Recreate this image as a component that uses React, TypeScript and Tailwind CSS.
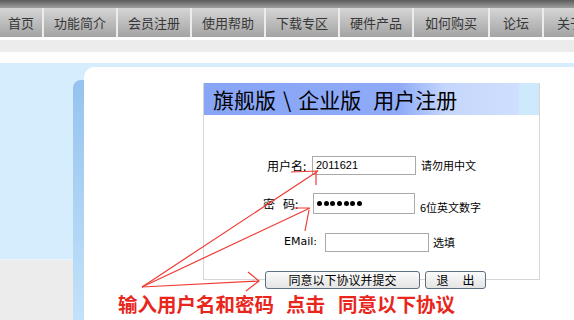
const navItems: [string, number][] = [
  ["首页", 44],
  ["功能简介", 74],
  ["会员注册", 74],
  ["使用帮助", 74],
  ["下载专区", 74],
  ["硬件产品", 74],
  ["如何购买", 76],
  ["论坛", 54],
  ["关于我们", 80],
];

const cjk = { fontFamily: '"Noto Sans CJK SC", "Noto Sans", sans-serif' };

function Dots() {
  return (
    <div className="flex items-center gap-[1.7px] pl-[3px]">
      {[0, 1, 2, 3, 4, 5, 6].map((i) => (
        <div key={i} className="w-[5px] h-[5px] rounded-full bg-black" />
      ))}
    </div>
  );
}

export default function App() {
  return (
    <div
      className="relative w-[574px] h-[320px] overflow-hidden bg-white text-black"
      style={cjk}
    >
      {/* top nav */}
      <div className="h-[8px] bg-gradient-to-b from-[#5c5c5c] to-[#a0a0a0]" />
      <div className="flex h-[29px] bg-gradient-to-b from-[#d6d6d6] to-[#a3a3a3]">
        {navItems.map(([label, w]) => (
          <div
            key={label}
            className="flex items-center justify-center shrink-0 border-r-2 border-[#ececec] text-[13px] text-[#373737]"
            style={{ width: w }}
          >
            {label}
          </div>
        ))}
      </div>
      <div className="h-[3px] bg-white" />
      <div className="h-[12px] bg-[#ececec]" />
      <div className="h-[11px] bg-white" />

      {/* page body */}
      <div className="flex h-[257px] bg-[#d5edfc] pt-[4px]">
        <div className="flex w-[73px] flex-col">
          <div className="h-[193px] border-b border-[#e6f3fc]" />
          <div className="flex-1 bg-[#ececec]" />
        </div>
        <div className="mt-[13px] w-[12px] rounded-tl-[8px] bg-gradient-to-b from-[#95c3ef] to-[#c2e2f9]" />
        <div className="-ml-[1px] flex-1 rounded-tl-[10px] bg-white pl-[119px] pt-[16px]">
          {/* register box */}
          <div className="h-[197px] w-[337px] border border-[#d6d6d6] border-t-0">
            <div className="flex h-[32px] items-center bg-[linear-gradient(to_right,#88a5f6_0%,#8eaaf7_58%,#c4d6fc_72%,#cfdffd_94%,#cde9fb_94%)] pl-[9px] text-[21px] leading-none text-black">
              <span>旗舰版</span>
              <span className="mx-[7px]">\</span>
              <span>企业版</span>
              <span className="ml-[12px]">用户注册</span>
            </div>

            <div className="pt-[41px] text-[12px]">
              <div className="flex h-[19px] items-center">
                <span className="ml-[63px] w-[45px]">用户名:</span>
                <div
                  className="flex h-[19px] w-[104px] items-center border border-[#a9a9a9] pl-[3px] text-[11px]"
                  style={{ fontFamily: '"Liberation Sans", sans-serif' }}
                >
                  2011621
                </div>
                <span className="ml-[5px] text-[11px]">请勿用中文</span>
              </div>

              <div className="mt-[18px] flex h-[21px] items-center">
                <span className="ml-[59px] w-[50px]">
                  密<span className="ml-[8px]">码:</span>
                </span>
                <div className="flex h-[21px] w-[102px] items-center border border-[#a9a9a9]">
                  <Dots />
                </div>
                <span className="ml-[5px] mt-[8px] text-[11px]">6位英文数字</span>
              </div>

              <div className="mt-[19px] flex h-[19px] items-center">
                <span
                  className="ml-[80px] w-[41px]"
                  style={{ fontFamily: '"DejaVu Sans", sans-serif', fontSize: 11 }}
                >
                  EMail:
                </span>
                <div className="h-[19px] w-[104px] border border-[#a9a9a9]" />
                <span className="ml-[4px] text-[11px]">选填</span>
              </div>

              <div className="mt-[19px] flex h-[18px]">
                <button className="ml-[61px] h-[18px] w-[155px] rounded-[3px] border border-[#5d6f82] bg-gradient-to-b from-[#fbfbfb] to-[#e4e4e4] text-[12px] leading-none">
                  同意以下协议并提交
                </button>
                <button className="ml-[5px] h-[18px] w-[61px] rounded-[3px] border border-[#5d6f82] bg-gradient-to-b from-[#fbfbfb] to-[#e4e4e4] text-[12px] leading-none">
                  退<span className="ml-[14px]">出</span>
                </button>
              </div>
            </div>
          </div>

          <div className="-ml-[85px] mt-[12px] flex text-[19.5px] font-bold leading-[24px] text-[#e8261c]">
            <span>输入用户名和密码</span>
            <span className="ml-[12px]">点击</span>
            <span className="ml-[13px]">同意以下协议</span>
          </div>
        </div>
      </div>

      {/* red annotation arrows */}
      <svg
        className="pointer-events-none absolute left-0 top-0"
        width="574"
        height="320"
        fill="none"
        stroke="#ef3b35"
        strokeWidth="1.2"
      >
        <path d="M142 287 L318 171 M291 172 L318 171 M316 185 L316 171" />
        <path d="M142 287 L310 208 M294 208 L310 208 M305 231 L309 210" />
        <path d="M142 287 L259 281 M248 272 L259 281 L246 291" />
      </svg>
    </div>
  );
}
